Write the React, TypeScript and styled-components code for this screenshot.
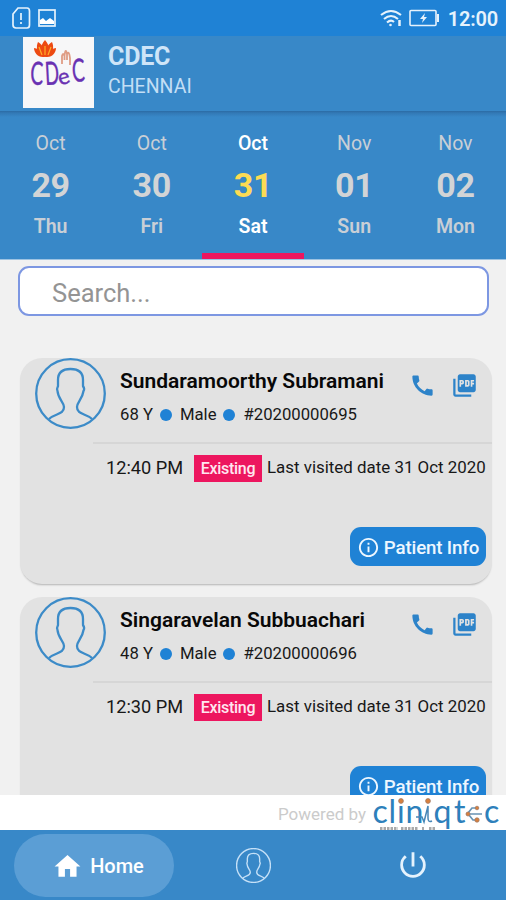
import React from "react";
import styled, { createGlobalStyle } from "styled-components";
import {
  MdCall,
  MdHome,
  MdInfoOutline,
  MdPictureAsPdf,
  MdPowerSettingsNew,
} from "react-icons/md";

const GlobalStyle = createGlobalStyle`
  * { box-sizing: border-box; }
  body { margin: 0; overflow: hidden; font-family: Roboto, sans-serif; }
`;

const BLUE = "#3888c8";
const BRIGHT = "#1f82d5";
const PINK = "#ed165f";

const Screen = styled.div`
  width: 506px;
  height: 900px;
  display: flex;
  flex-direction: column;
  background: #f1f1f1;
  overflow: hidden;
`;

const StatusBar = styled.div`
  flex: none;
  height: 36px;
  display: flex;
  align-items: center;
  justify-content: space-between;
  padding: 0 8px 0 11px;
  background: ${BRIGHT};
  color: #e6f2fc;
`;

const StatusGroup = styled.div`
  display: flex;
  align-items: center;
  gap: 7px;
`;

const Clock = styled.span`
  font-size: 20px;
  line-height: 36px;
  font-weight: 600;
  margin-left: 2px;
  padding-top: 2px;
  letter-spacing: -0.2px;
`;

const Header = styled.header`
  flex: none;
  height: 75px;
  display: flex;
  padding-left: 23px;
  gap: 14px;
  background: ${BLUE};
`;

const LogoBox = styled.div`
  width: 71px;
  height: 71px;
  margin-top: 1px;
  background: #f7f7f8;
`;

const Clinic = styled.div`
  display: flex;
  flex-direction: column;
  padding-top: 6px;
`;

const ClinicName = styled.h1`
  margin: 0;
  font-size: 25px;
  line-height: 30px;
  font-weight: 700;
  letter-spacing: -0.2px;
  color: #cfe5f8;
`;

const ClinicCity = styled.span`
  font-size: 19.5px;
  line-height: 30px;
  color: #c3def5;
`;

const DateStrip = styled.nav`
  flex: none;
  height: 149px;
  display: grid;
  grid-template-columns: repeat(5, 1fr);
  background: linear-gradient(#2b6ba4 0, #3279b6 2px, ${BLUE} 6px);
  border-bottom: 1px solid #9dc3e2;
`;

const Day = styled.div<{ $active?: boolean }>`
  display: flex;
  flex-direction: column;
  align-items: center;
  padding-top: 21px;
  color: ${(p) => (p.$active ? "#ffffff" : "#c9cfd6")};
  border-bottom: 6px solid ${(p) => (p.$active ? PINK : "transparent")};
`;

const Month = styled.span<{ $active?: boolean }>`
  font-size: 19.5px;
  line-height: 24px;
  font-weight: ${(p) => (p.$active ? 500 : 400)};
`;

const DayNumber = styled.span<{ $active?: boolean }>`
  font-size: 34px;
  line-height: 40px;
  margin-top: 9px;
  font-weight: 700;
  letter-spacing: -0.3px;
  color: ${(p) => (p.$active ? "#fddb54" : "#d2d4d6")};
`;

const Weekday = styled.span`
  font-size: 19.5px;
  line-height: 24px;
  margin-top: 10px;
  font-weight: 600;
`;

const Content = styled.main`
  flex: 1;
  min-height: 0;
  overflow: hidden;
  display: flex;
  flex-direction: column;
  padding: 6px 14px 0 20px;
`;

const SearchBox = styled.div`
  flex: none;
  width: 471px;
  height: 50px;
  margin-left: -2px;
  padding: 3px 0 0 32px;
  margin-bottom: 42px;
  display: flex;
  align-items: center;
  border: 2px solid #7d97e2;
  border-radius: 11px;
  background: #fff;
  color: #949494;
  font-size: 25.5px;
`;

const Card = styled.article`
  flex: none;
  height: 226px;
  margin-bottom: 13px;
  border-radius: 22px;
  background: #e2e2e2;
  box-shadow: 0 2px 2px -1px rgba(0, 0, 0, 0.25);
  display: flex;
  flex-direction: column;
`;

const CardTop = styled.div`
  height: 84px;
  display: flex;
  padding: 0 14px 0 15px;
`;

const Details = styled.div`
  flex: 1;
  padding-left: 14px;
  padding-top: 9px;
  display: flex;
  flex-direction: column;
`;

const PatientName = styled.h2`
  margin: 0;
  font-size: 21px;
  line-height: 28px;
  font-weight: 600;
  color: #080808;
  white-space: nowrap;
`;

const Meta = styled.div`
  display: flex;
  align-items: center;
  margin-top: 8px;
  font-size: 16.7px;
  line-height: 24px;
  color: #181818;
`;

const Dot = styled.i`
  width: 12px;
  height: 12px;
  border-radius: 50%;
  background: ${BRIGHT};
  margin: 0 8px 0 7px;
`;

const Actions = styled.div`
  display: flex;
  gap: 15px;
  padding-top: 14px;
  color: #2d83c9;
`;

const Visit = styled.div`
  height: 51px;
  margin-left: 73px;
  border-top: 2px solid #d6d6d6;
  display: flex;
  align-items: center;
  padding-left: 13px;
  color: #181818;
  white-space: nowrap;
`;

const VisitTime = styled.span`
  width: 88px;
  font-size: 18.2px;
  padding-bottom: 3px;
`;

const Tag = styled.span`
  width: 68px;
  height: 27px;
  line-height: 27px;
  text-align: center;
  background: ${PINK};
  color: #ffe6ef;
  font-size: 16px;
  font-weight: 500;
  letter-spacing: -0.3px;
  margin-right: 5px;
`;

const LastVisit = styled.span`
  font-size: 16.9px;
  padding-bottom: 3px;
`;

const InfoButton = styled.button`
  align-self: flex-end;
  width: 136px;
  height: 39px;
  margin: 34px 6px 0 0;
  padding: 2px 0 0;
  border: 0;
  border-radius: 11px;
  background: ${BRIGHT};
  color: #eef7ff;
  font: 500 18.7px Roboto, sans-serif;
  letter-spacing: -0.15px;
  display: flex;
  align-items: center;
  justify-content: center;
  gap: 4px;
  white-space: nowrap;
`;

const Powered = styled.footer`
  flex: none;
  height: 35px;
  display: flex;
  justify-content: flex-end;
  align-items: center;
  gap: 6px;
  padding-right: 4px;
  background: #fff;
  color: #cbcbcb;
  font-size: 17px;
  overflow: hidden;
`;

const PoweredText = styled.span`
  padding-top: 2px;
`;

const BottomNav = styled.nav`
  flex: none;
  height: 70px;
  display: grid;
  grid-template-columns: 188px 131px 187px;
  align-items: center;
  justify-items: center;
  background: ${BLUE};
  color: #e5f2fd;
`;

const HomeTab = styled.div`
  width: 160px;
  height: 63px;
  border-radius: 32px;
  background: #5b9ed5;
  color: #fff;
  display: flex;
  align-items: center;
  justify-content: center;
  padding: 2px 0 0 8px;
  gap: 7px;
  font-size: 20px;
  font-weight: 500;
`;

const Glyph = styled.svg`
  display: block;
  flex: none;
`;

function Person({ size, stroke, width }: { size: number; stroke: string; width: number }) {
  return (
    <Glyph width={size} height={size} viewBox="0 0 71 71" fill="none" stroke={stroke} strokeWidth={width}>
      <circle cx="35.5" cy="35.5" r="34.3" />
      <path d="M14 61 C20 55 29 57 29 49 C29 44 23 41 22.500 33 Q21.500 31 23 28 V22 Q23 11 35.500 11 Q48 11 48 22 V28 Q50 31 48.500 33 C47.500 41 42 44 42 49 C42 57 51 55 57 61" />
    </Glyph>
  );
}

function ClinicLogo() {
  return (
    <Glyph width="71" height="71" viewBox="0 0 71 71">
      <g fill="#ed4a12">
        <path d="M22 20 C15 16 17 9 22 3 C27 9 29 16 22 20Z" />
        <path d="M21 20 C13 17 13 9 15 5 C20 8 23 14 21 20Z" />
        <path d="M23 20 C31 17 31 9 29 5 C24 8 21 14 23 20Z" />
        <path d="M20 20 C14 20 11 15 11 11 C17 12 21 15 22 20Z" />
        <path d="M24 20 C30 20 33 15 33 11 C27 12 23 15 22 20Z" />
      </g>
      <path d="M22 18 V9 M19 18 L16 10 M25 18 L28 10" stroke="#ffad28" strokeWidth="1.2" />
      <path d="M39 27 V19 Q40 15 41.500 19 V23 M41.500 19 Q42.500 10 44 17 V23 M44 17 Q46 13 47 21 V28" fill="none" stroke="#df9c84" strokeWidth="1.8" />
      <g fill="#6931b2" stroke="#6931b2" strokeWidth=".4" strokeLinejoin="round" fontFamily="Lato">
        <text transform="translate(7 47.500) rotate(2) scale(.6 1)" fontSize="32">C</text>
        <text transform="translate(22.500 48) rotate(-3) scale(.58 1)" fontSize="32">D</text>
        <text transform="translate(37 48.500) rotate(-16)" fontSize="22">e</text>
        <text transform="translate(49.500 45) rotate(-3) scale(.6 1)" fontSize="32">C</text>
      </g>
    </Glyph>
  );
}

function CliniqLogo() {
  return (
    <Glyph width="130" height="35" viewBox="0 0 130 35">
      <g fill="#2d80bb" fontFamily="Lato" fontSize="32" fontWeight="400">
        <text x="0.500" y="27.500">c</text>
        <text x="16.500" y="27.500">l</text>
        <text x="25" y="27.500">ı</text>
        <text x="33.500" y="27.500">n</text>
        <text x="61.500" y="27.500">q</text>
        <text x="82" y="27.500">t</text>
        <text x="112" y="27.500">c</text>
      </g>
      <path d="M44 22 H50 L52 27 L56 11 V23 Q56 28 60 26" fill="none" stroke="#4887b7" strokeWidth="1.500" />
      <path d="M94 19 H110 M96 18 L100 13 H104 M97 20 L101 25 H104" fill="none" stroke="#6793b4" strokeWidth="1.700" />
      <g fill="#d8803d" stroke="#a17a65" strokeWidth=".8">
        <circle cx="29" cy="6" r="2.4" />
        <circle cx="56" cy="6" r="2.4" />
        <circle cx="105" cy="13" r="1.8" />
        <circle cx="96" cy="19" r="2" />
        <circle cx="105" cy="25" r="2.2" />
      </g>
      <path d="M8 33.500 H26 M29 33.500 H46 M50 33.500 H52 M57 33.500 H64" stroke="#aaa" strokeWidth="3" strokeDasharray="2.500 1" />
    </Glyph>
  );
}

const days = [
  { month: "Oct", day: "29", weekday: "Thu" },
  { month: "Oct", day: "30", weekday: "Fri" },
  { month: "Oct", day: "31", weekday: "Sat", active: true },
  { month: "Nov", day: "01", weekday: "Sun" },
  { month: "Nov", day: "02", weekday: "Mon" },
];

const patients = [
  { name: "Sundaramoorthy Subramani", age: "68 Y", id: "#20200000695", time: "12:40 PM" },
  { name: "Singaravelan Subbuachari", age: "48 Y", id: "#20200000696", time: "12:30 PM" },
];

export default function App() {
  return (
    <>
      <GlobalStyle />
      <Screen>
        <StatusBar>
          <StatusGroup>
            <Glyph width="20" height="24" viewBox="0 0 20 24" fill="none" stroke="currentColor" strokeWidth="1.7">
              <path d="M7 2 H16 Q18.500 2 18.500 5 V19 Q18.500 22 16 22 H5 Q2 22 2 19 V8Z" />
              <path d="M10 7 V14 M10 16 V18" />
            </Glyph>
            <Glyph width="18" height="18" viewBox="0 0 18 18">
              <rect x="1" y="1" width="16" height="16" fill="none" stroke="currentColor" strokeWidth="1.7" />
              <path d="M2 11 L5 9 L8 12 L12 9 L16 12 V15 H2Z" fill="#fff" />
            </Glyph>
          </StatusGroup>
          <StatusGroup>
            <Glyph width="22" height="19" viewBox="0 0 22 19" fill="none" stroke="currentColor" strokeWidth="2.1">
              <path d="M1 6 Q11 -2 21 6 M4 10 Q11 4 18 10 M7 13.500 Q11 10 14 13" />
              <circle cx="10.500" cy="16" r="1.3" fill="currentColor" stroke="none" />
              <path d="M19.500 11 V17" strokeWidth="2.5" />
            </Glyph>
            <Glyph width="30" height="18" viewBox="0 0 30 18" fill="none" stroke="currentColor" strokeWidth="1.600">
              <rect x="1" y="1.500" width="26" height="15" rx="1" />
              <path d="M29 5 V13" strokeWidth="2" />
              <path d="M16 4 L11 10 H14 L13 14 L18 8 H15Z" fill="currentColor" stroke="none" />
            </Glyph>
            <Clock>12:00</Clock>
          </StatusGroup>
        </StatusBar>
        <Header>
          <LogoBox><ClinicLogo /></LogoBox>
          <Clinic>
            <ClinicName>CDEC</ClinicName>
            <ClinicCity>CHENNAI</ClinicCity>
          </Clinic>
        </Header>
        <DateStrip>
          {days.map((d) => (
            <Day key={d.day} $active={d.active}>
              <Month $active={d.active}>{d.month}</Month>
              <DayNumber $active={d.active}>{d.day}</DayNumber>
              <Weekday>{d.weekday}</Weekday>
            </Day>
          ))}
        </DateStrip>
        <Content>
          <SearchBox>Search...</SearchBox>
          {patients.map((p) => (
            <Card key={p.id}>
              <CardTop>
                <Person size={71} stroke="#3c8bc8" width={2.3} />
                <Details>
                  <PatientName>{p.name}</PatientName>
                  <Meta>
                    {p.age}<Dot />Male<Dot />{p.id}
                  </Meta>
                </Details>
                <Actions>
                  <MdCall size={27} />
                  <MdPictureAsPdf size={27} />
                </Actions>
              </CardTop>
              <Visit>
                <VisitTime>{p.time}</VisitTime>
                <Tag>Existing</Tag>
                <LastVisit>Last visited date 31 Oct 2020</LastVisit>
              </Visit>
              <InfoButton><MdInfoOutline size={23} />Patient Info</InfoButton>
            </Card>
          ))}
        </Content>
        <Powered>
          <PoweredText>Powered by</PoweredText>
          <CliniqLogo />
        </Powered>
        <BottomNav>
          <HomeTab><MdHome size={31} />Home</HomeTab>
          <Person size={35} stroke="#c5e0f7" width={2.8} />
          <MdPowerSettingsNew size={34} />
        </BottomNav>
      </Screen>
    </>
  );
}
